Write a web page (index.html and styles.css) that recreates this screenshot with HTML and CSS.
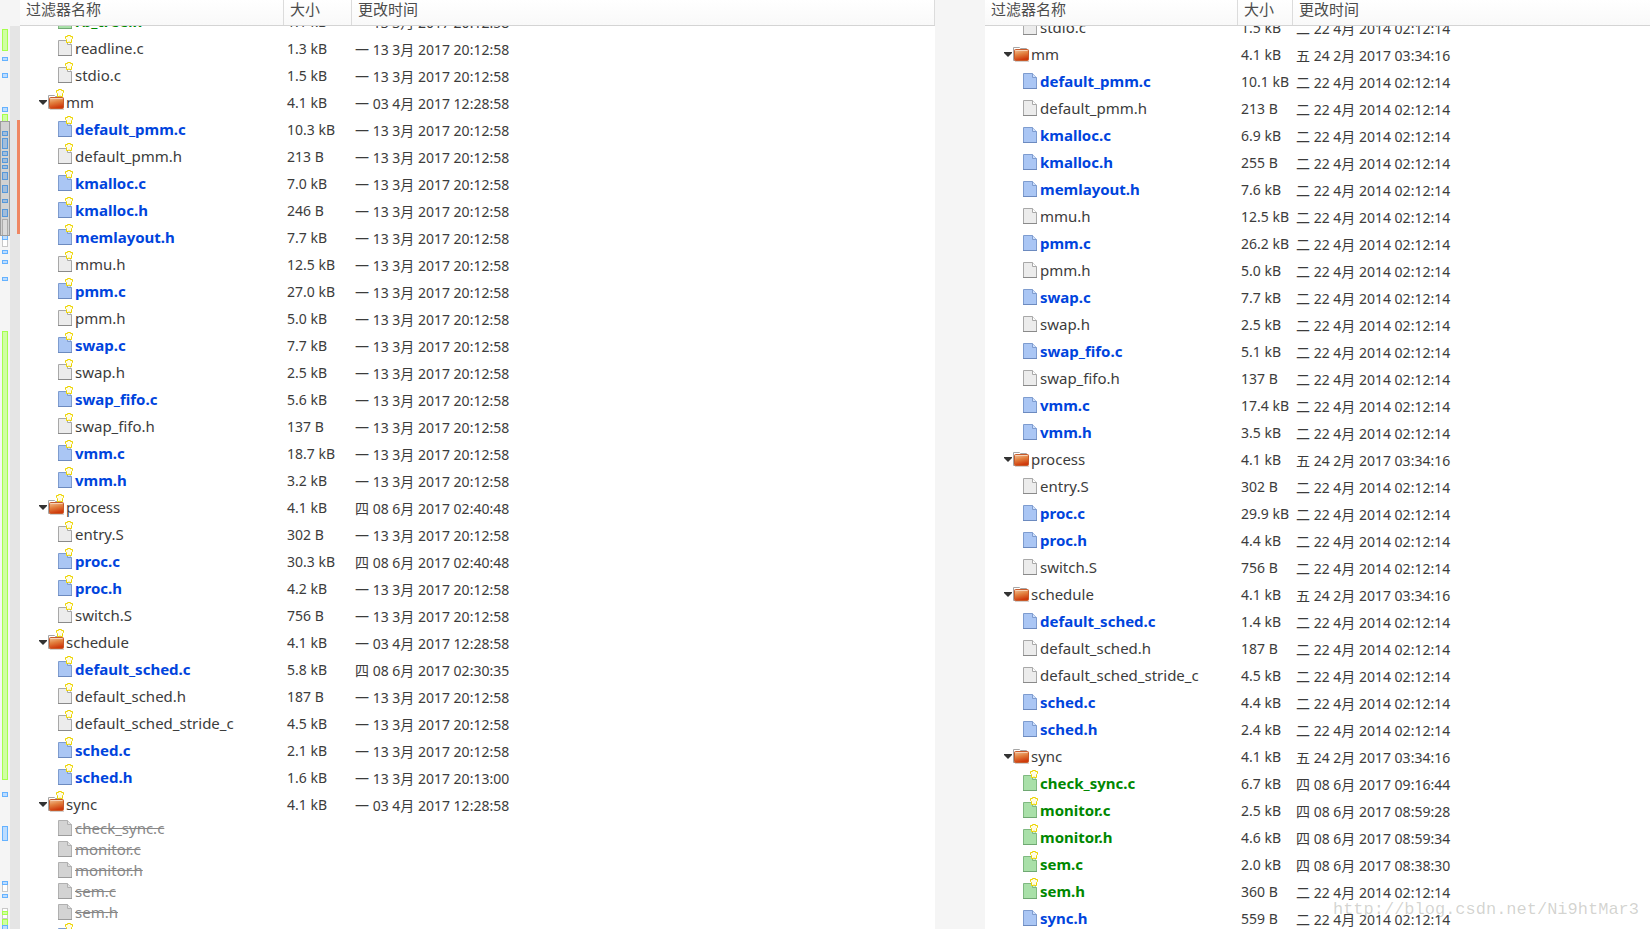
FILE: index.html
```html
<!DOCTYPE html>
<html lang="zh-CN">
<head>
<meta charset="utf-8">
<title>文件夹比较</title>
<link rel="stylesheet" href="styles.css">
</head>
<body>
<svg class="defs" aria-hidden="true">
  <defs>
    <linearGradient id="folder-fill" x1="0" y1="0" x2="0.3" y2="1">
      <stop offset="0" stop-color="#f3c59c"/><stop offset="0.5" stop-color="#e2803f"/><stop offset="1" stop-color="#cf3a0c"/>
    </linearGradient>
    <symbol id="doc" viewBox="0 0 17 27">
      <path d="M0.5 4.5H9.5L13.5 8.5V19.5H0.5Z" fill="var(--fill)" stroke="var(--edge)"/>
      <path d="M9.5 4.5V8.5H13.5" fill="var(--fold)" stroke="var(--edge)"/>
      <path d="M0 19.5H14" stroke="var(--base)"/>
    </symbol>
    <symbol id="star" viewBox="0 0 8 8">
      <path d="M2.5 0.5H5.5V1.5H7.5V3.5L6.5 4.5V7.5H5L4 7L3 7.5H1.5V4.5L0.5 3.5V1.5H2.5Z" fill="#fffce6" stroke="#ecd400"/>
    </symbol>
    <symbol id="doc-new" viewBox="0 0 17 27">
      <use href="#doc" width="17" height="27"/>
      <use href="#star" x="7" y="-1" width="8" height="8"/>
    </symbol>
    <symbol id="dir" viewBox="0 0 18 27">
      <path d="M2 18.5H0.5V5.5H6.5L7.5 6.5H13.5V9" fill="#fff" stroke="#a6a6a6"/>
      <path d="M2 19.5H16" stroke="#d4d0ce"/>
      <rect x="1.5" y="7.5" width="14" height="11" rx="1" fill="url(#folder-fill)" stroke="#c85a2a"/>
      <path d="M2.5 8.5H14.5" stroke="#f6d2b5"/>
    </symbol>
    <symbol id="dir-new" viewBox="0 0 18 27">
      <use href="#dir" width="18" height="27"/>
      <use href="#star" x="8" y="-1" width="8" height="8"/>
    </symbol>
  </defs>
</svg>
<main class="compare">
  <div class="overview">
    <svg class="map" width="10" height="929" aria-label="差异概览">
      <g class="m-same"><rect x="2.5" y="219.5" width="5" height="27"/><rect x="2.5" y="884.5" width="5" height="7"/><rect x="2.5" y="908.5" width="5" height="3"/><rect x="2.5" y="914.5" width="5" height="4"/></g>
      <g class="m-new"><rect x="2.5" y="29.5" width="5" height="21"/><rect x="2.5" y="114.5" width="5" height="7"/><rect x="2.5" y="331.5" width="5" height="448"/><rect x="2.5" y="911.5" width="5" height="3"/><rect x="2.5" y="919.5" width="5" height="6"/></g>
      <g class="m-mod"><rect x="2.5" y="57.5" width="5" height="3"/><rect x="2.5" y="73.5" width="5" height="4"/><rect x="2.5" y="107.5" width="5" height="4"/><rect x="2.5" y="131.5" width="5" height="4"/><rect x="2.5" y="138.5" width="5" height="10"/><rect x="2.5" y="151.5" width="5" height="4"/><rect x="2.5" y="158.5" width="5" height="4"/><rect x="2.5" y="165.5" width="5" height="3"/><rect x="2.5" y="172.5" width="5" height="7"/><rect x="2.5" y="185.5" width="5" height="7"/><rect x="2.5" y="199.5" width="5" height="3"/><rect x="2.5" y="209.5" width="5" height="7"/><rect x="2.5" y="235.5" width="5" height="4"/><rect x="2.5" y="250.5" width="5" height="3"/><rect x="2.5" y="260.5" width="5" height="3"/><rect x="2.5" y="277.5" width="5" height="3"/><rect x="2.5" y="792.5" width="5" height="4"/><rect x="2.5" y="826.5" width="5" height="14"/><rect x="2.5" y="881.5" width="5" height="3"/><rect x="2.5" y="894.5" width="5" height="3"/><rect x="2.5" y="925.5" width="5" height="4"/></g>
      <rect class="m-view" x="0.5" y="121.5" width="9" height="114"/>
    </svg>
    <svg class="track" width="10" height="929" aria-hidden="true"><rect x="7" y="94" width="3" height="114"/></svg>
  </div>
  <section class="pane left">
    <header class="cols"><button>过滤器名称</button><button>大小</button><button>更改时间</button></header>
    <div class="body">
      <table>
        <colgroup><col class="c-name"><col class="c-size"><col></colgroup>
        <tbody>
        <tr class="new"><td><svg><use href="#doc-new"/></svg>rb_tree.h</td><td>1.1 kB</td><td>一 13 3月 2017 20:12:58</td></tr>
        <tr><td><svg><use href="#doc-new"/></svg>readline.c</td><td>1.3 kB</td><td>一 13 3月 2017 20:12:58</td></tr>
        <tr><td><svg><use href="#doc-new"/></svg>stdio.c</td><td>1.5 kB</td><td>一 13 3月 2017 20:12:58</td></tr>
        <tr class="dir"><td><button aria-label="折叠"></button><svg><use href="#dir-new"/></svg>mm</td><td>4.1 kB</td><td>一 03 4月 2017 12:28:58</td></tr>
        <tr class="mod"><td><svg><use href="#doc-new"/></svg>default_pmm.c</td><td>10.3 kB</td><td>一 13 3月 2017 20:12:58</td></tr>
        <tr><td><svg><use href="#doc-new"/></svg>default_pmm.h</td><td>213 B</td><td>一 13 3月 2017 20:12:58</td></tr>
        <tr class="mod"><td><svg><use href="#doc-new"/></svg>kmalloc.c</td><td>7.0 kB</td><td>一 13 3月 2017 20:12:58</td></tr>
        <tr class="mod"><td><svg><use href="#doc-new"/></svg>kmalloc.h</td><td>246 B</td><td>一 13 3月 2017 20:12:58</td></tr>
        <tr class="mod"><td><svg><use href="#doc-new"/></svg>memlayout.h</td><td>7.7 kB</td><td>一 13 3月 2017 20:12:58</td></tr>
        <tr><td><svg><use href="#doc-new"/></svg>mmu.h</td><td>12.5 kB</td><td>一 13 3月 2017 20:12:58</td></tr>
        <tr class="mod"><td><svg><use href="#doc-new"/></svg>pmm.c</td><td>27.0 kB</td><td>一 13 3月 2017 20:12:58</td></tr>
        <tr><td><svg><use href="#doc-new"/></svg>pmm.h</td><td>5.0 kB</td><td>一 13 3月 2017 20:12:58</td></tr>
        <tr class="mod"><td><svg><use href="#doc-new"/></svg>swap.c</td><td>7.7 kB</td><td>一 13 3月 2017 20:12:58</td></tr>
        <tr><td><svg><use href="#doc-new"/></svg>swap.h</td><td>2.5 kB</td><td>一 13 3月 2017 20:12:58</td></tr>
        <tr class="mod"><td><svg><use href="#doc-new"/></svg>swap_fifo.c</td><td>5.6 kB</td><td>一 13 3月 2017 20:12:58</td></tr>
        <tr><td><svg><use href="#doc-new"/></svg>swap_fifo.h</td><td>137 B</td><td>一 13 3月 2017 20:12:58</td></tr>
        <tr class="mod"><td><svg><use href="#doc-new"/></svg>vmm.c</td><td>18.7 kB</td><td>一 13 3月 2017 20:12:58</td></tr>
        <tr class="mod"><td><svg><use href="#doc-new"/></svg>vmm.h</td><td>3.2 kB</td><td>一 13 3月 2017 20:12:58</td></tr>
        <tr class="dir"><td><button aria-label="折叠"></button><svg><use href="#dir-new"/></svg>process</td><td>4.1 kB</td><td>四 08 6月 2017 02:40:48</td></tr>
        <tr><td><svg><use href="#doc-new"/></svg>entry.S</td><td>302 B</td><td>一 13 3月 2017 20:12:58</td></tr>
        <tr class="mod"><td><svg><use href="#doc-new"/></svg>proc.c</td><td>30.3 kB</td><td>四 08 6月 2017 02:40:48</td></tr>
        <tr class="mod"><td><svg><use href="#doc-new"/></svg>proc.h</td><td>4.2 kB</td><td>一 13 3月 2017 20:12:58</td></tr>
        <tr><td><svg><use href="#doc-new"/></svg>switch.S</td><td>756 B</td><td>一 13 3月 2017 20:12:58</td></tr>
        <tr class="dir"><td><button aria-label="折叠"></button><svg><use href="#dir-new"/></svg>schedule</td><td>4.1 kB</td><td>一 03 4月 2017 12:28:58</td></tr>
        <tr class="mod"><td><svg><use href="#doc-new"/></svg>default_sched.c</td><td>5.8 kB</td><td>四 08 6月 2017 02:30:35</td></tr>
        <tr><td><svg><use href="#doc-new"/></svg>default_sched.h</td><td>187 B</td><td>一 13 3月 2017 20:12:58</td></tr>
        <tr><td><svg><use href="#doc-new"/></svg>default_sched_stride_c</td><td>4.5 kB</td><td>一 13 3月 2017 20:12:58</td></tr>
        <tr class="mod"><td><svg><use href="#doc-new"/></svg>sched.c</td><td>2.1 kB</td><td>一 13 3月 2017 20:12:58</td></tr>
        <tr class="mod"><td><svg><use href="#doc-new"/></svg>sched.h</td><td>1.6 kB</td><td>一 13 3月 2017 20:13:00</td></tr>
        <tr class="dir"><td><button aria-label="折叠"></button><svg><use href="#dir-new"/></svg>sync</td><td>4.1 kB</td><td>一 03 4月 2017 12:28:58</td></tr>
        <tr class="gone"><td><svg viewBox="0 3 17 21"><use href="#doc" width="17" height="27"/></svg><s>check_sync.c</s></td><td></td><td></td></tr>
        <tr class="gone"><td><svg viewBox="0 3 17 21"><use href="#doc" width="17" height="27"/></svg><s>monitor.c</s></td><td></td><td></td></tr>
        <tr class="gone"><td><svg viewBox="0 3 17 21"><use href="#doc" width="17" height="27"/></svg><s>monitor.h</s></td><td></td><td></td></tr>
        <tr class="gone"><td><svg viewBox="0 3 17 21"><use href="#doc" width="17" height="27"/></svg><s>sem.c</s></td><td></td><td></td></tr>
        <tr class="gone"><td><svg viewBox="0 3 17 21"><use href="#doc" width="17" height="27"/></svg><s>sem.h</s></td><td></td><td></td></tr>
        <tr class="mod"><td><svg><use href="#doc-new"/></svg></td><td></td><td></td></tr>
        </tbody>
      </table>
    </div>
  </section>
  <section class="pane right">
    <header class="cols"><button>过滤器名称</button><button>大小</button><button>更改时间</button></header>
    <div class="body">
      <table>
        <colgroup><col class="c-name"><col class="c-size"><col></colgroup>
        <tbody>
        <tr><td><svg><use href="#doc"/></svg>stdio.c</td><td>1.5 kB</td><td>二 22 4月 2014 02:12:14</td></tr>
        <tr class="dir"><td><button aria-label="折叠"></button><svg><use href="#dir"/></svg>mm</td><td>4.1 kB</td><td>五 24 2月 2017 03:34:16</td></tr>
        <tr class="mod"><td><svg><use href="#doc"/></svg>default_pmm.c</td><td>10.1 kB</td><td>二 22 4月 2014 02:12:14</td></tr>
        <tr><td><svg><use href="#doc"/></svg>default_pmm.h</td><td>213 B</td><td>二 22 4月 2014 02:12:14</td></tr>
        <tr class="mod"><td><svg><use href="#doc"/></svg>kmalloc.c</td><td>6.9 kB</td><td>二 22 4月 2014 02:12:14</td></tr>
        <tr class="mod"><td><svg><use href="#doc"/></svg>kmalloc.h</td><td>255 B</td><td>二 22 4月 2014 02:12:14</td></tr>
        <tr class="mod"><td><svg><use href="#doc"/></svg>memlayout.h</td><td>7.6 kB</td><td>二 22 4月 2014 02:12:14</td></tr>
        <tr><td><svg><use href="#doc"/></svg>mmu.h</td><td>12.5 kB</td><td>二 22 4月 2014 02:12:14</td></tr>
        <tr class="mod"><td><svg><use href="#doc"/></svg>pmm.c</td><td>26.2 kB</td><td>二 22 4月 2014 02:12:14</td></tr>
        <tr><td><svg><use href="#doc"/></svg>pmm.h</td><td>5.0 kB</td><td>二 22 4月 2014 02:12:14</td></tr>
        <tr class="mod"><td><svg><use href="#doc"/></svg>swap.c</td><td>7.7 kB</td><td>二 22 4月 2014 02:12:14</td></tr>
        <tr><td><svg><use href="#doc"/></svg>swap.h</td><td>2.5 kB</td><td>二 22 4月 2014 02:12:14</td></tr>
        <tr class="mod"><td><svg><use href="#doc"/></svg>swap_fifo.c</td><td>5.1 kB</td><td>二 22 4月 2014 02:12:14</td></tr>
        <tr><td><svg><use href="#doc"/></svg>swap_fifo.h</td><td>137 B</td><td>二 22 4月 2014 02:12:14</td></tr>
        <tr class="mod"><td><svg><use href="#doc"/></svg>vmm.c</td><td>17.4 kB</td><td>二 22 4月 2014 02:12:14</td></tr>
        <tr class="mod"><td><svg><use href="#doc"/></svg>vmm.h</td><td>3.5 kB</td><td>二 22 4月 2014 02:12:14</td></tr>
        <tr class="dir"><td><button aria-label="折叠"></button><svg><use href="#dir"/></svg>process</td><td>4.1 kB</td><td>五 24 2月 2017 03:34:16</td></tr>
        <tr><td><svg><use href="#doc"/></svg>entry.S</td><td>302 B</td><td>二 22 4月 2014 02:12:14</td></tr>
        <tr class="mod"><td><svg><use href="#doc"/></svg>proc.c</td><td>29.9 kB</td><td>二 22 4月 2014 02:12:14</td></tr>
        <tr class="mod"><td><svg><use href="#doc"/></svg>proc.h</td><td>4.4 kB</td><td>二 22 4月 2014 02:12:14</td></tr>
        <tr><td><svg><use href="#doc"/></svg>switch.S</td><td>756 B</td><td>二 22 4月 2014 02:12:14</td></tr>
        <tr class="dir"><td><button aria-label="折叠"></button><svg><use href="#dir"/></svg>schedule</td><td>4.1 kB</td><td>五 24 2月 2017 03:34:16</td></tr>
        <tr class="mod"><td><svg><use href="#doc"/></svg>default_sched.c</td><td>1.4 kB</td><td>二 22 4月 2014 02:12:14</td></tr>
        <tr><td><svg><use href="#doc"/></svg>default_sched.h</td><td>187 B</td><td>二 22 4月 2014 02:12:14</td></tr>
        <tr><td><svg><use href="#doc"/></svg>default_sched_stride_c</td><td>4.5 kB</td><td>二 22 4月 2014 02:12:14</td></tr>
        <tr class="mod"><td><svg><use href="#doc"/></svg>sched.c</td><td>4.4 kB</td><td>二 22 4月 2014 02:12:14</td></tr>
        <tr class="mod"><td><svg><use href="#doc"/></svg>sched.h</td><td>2.4 kB</td><td>二 22 4月 2014 02:12:14</td></tr>
        <tr class="dir"><td><button aria-label="折叠"></button><svg><use href="#dir"/></svg>sync</td><td>4.1 kB</td><td>五 24 2月 2017 03:34:16</td></tr>
        <tr class="new"><td><svg><use href="#doc-new"/></svg>check_sync.c</td><td>6.7 kB</td><td>四 08 6月 2017 09:16:44</td></tr>
        <tr class="new"><td><svg><use href="#doc-new"/></svg>monitor.c</td><td>2.5 kB</td><td>四 08 6月 2017 08:59:28</td></tr>
        <tr class="new"><td><svg><use href="#doc-new"/></svg>monitor.h</td><td>4.6 kB</td><td>四 08 6月 2017 08:59:34</td></tr>
        <tr class="new"><td><svg><use href="#doc-new"/></svg>sem.c</td><td>2.0 kB</td><td>四 08 6月 2017 08:38:30</td></tr>
        <tr class="new"><td><svg><use href="#doc-new"/></svg>sem.h</td><td>360 B</td><td>二 22 4月 2014 02:12:14</td></tr>
        <tr class="mod"><td><svg><use href="#doc"/></svg>sync.h</td><td>559 B</td><td>二 22 4月 2014 02:12:14</td></tr>
        </tbody>
      </table>
    </div>
  </section>
  <div class="watermark">http://blog.csdn.net/Ni9htMar3</div>
</main>
</body>
</html>
```
FILE: styles.css
```css
* { box-sizing: border-box; }

body {
  margin: 0;
  background: #f5f5f5;
  color: #3c3c3c;
  font-family: "Noto Sans", "Noto Sans CJK SC", sans-serif;
  font-size: 14px;
}

button {
  margin: 0;
  padding: 0;
  border: 0;
  background: none;
  color: inherit;
  font: inherit;
}

.defs { position: absolute; width: 0; height: 0; }
symbol { overflow: visible; }

.compare {
  position: relative;
  display: grid;
  grid-template-columns: 20px minmax(0, 915fr) 50px minmax(0, 665fr);
  height: 100vh;
  overflow: hidden;
}

.overview { display: flex; overflow: hidden; }
.map, .track { display: block; flex: none; }
.track { margin-top: 26px; background: #e5e5e5; }
.track rect { fill: #ef8763; }
.m-same rect { fill: #fff; stroke: #c8c8c8; }
.m-new rect { fill: #d0ffa3; stroke: #a5ff4c; }
.m-mod rect { fill: #bdddff; stroke: #65b2ff; }
.m-view { fill: rgb(0 0 0 / 14%); stroke: #9c9c9c; }

.pane {
  display: flex;
  flex-direction: column;
  min-height: 0;
  background: #fff;
}
.left { --name: 264px; --size: 68px; }
.right { --name: 253px; --size: 55px; grid-column: 4; }

.cols {
  display: grid;
  grid-template-columns: var(--name) var(--size) 1fr;
  height: 26px;
  flex: none;
  border-bottom: 1px solid #d4d4d4;
  background: linear-gradient(#fff, #f9f9f9);
}
.cols button {
  padding: 0 0 6px 6px;
  border-right: 1px solid #dcdcdc;
  color: #4c4c4c;
  font-size: 15px;
  line-height: 19px;
  text-align: left;
}
.right .cols button:last-child { border-right: 0; }

.body { flex: 1; min-height: 0; overflow: hidden; }
.left table { margin-top: -17px; }
.right table { margin-top: -11px; }

table {
  width: 100%;
  border-collapse: collapse;
  table-layout: fixed;
}
.c-name { width: var(--name); }
.c-size { width: var(--size); }

tr {
  --fill: #ececec;
  --fold: #fff;
  --edge: #a8a8a8;
  --base: #8a8a8a;
  height: 27px;
}
td {
  height: 27px;
  padding: 0 0 0 3px;
  line-height: 25px;
  white-space: nowrap;
  vertical-align: top;
}
td:first-child { padding-left: 38px; font-size: 15px; }
td:last-child { line-height: 27px; }
td svg {
  width: 17px;
  height: 27px;
  vertical-align: top;
  overflow: visible;
}

.dir td:first-child { padding-left: 19px; }
.dir svg { width: 18px; }
.dir button {
  width: 9px;
  height: 27px;
  vertical-align: top;
}
.dir button::before {
  content: "";
  display: block;
  width: 8px;
  height: 5px;
  margin-bottom: 2px;
  background: #333;
  clip-path: polygon(0 0, 100% 0, 100% 20%, 50% 100%, 0 20%);
}

.mod { --fill: #aac6f4; --fold: #cfe0fb; --edge: #7e9ccf; --base: #6c8abf; }
.new { --fill: #a9e0a9; --fold: #cdf0cd; --edge: #7fb981; --base: #6fa872; }
.mod td:first-child, .new td:first-child { font-weight: 700; }
.mod td:first-child { color: #0044dd; }
.new td:first-child { color: #008800; }

.gone { --fill: #d3d3d3; --fold: #e2e2e2; --edge: #b0b0b0; --base: #9c9c9c; height: 21px; }
.gone td { height: 21px; line-height: 19px; color: #888; }
.gone svg { height: 21px; }

.watermark {
  position: absolute;
  right: 11px;
  bottom: 9px;
  color: rgb(120 120 110 / 32%);
  font-family: "Liberation Mono", monospace;
  font-size: 17px;
  line-height: 20px;
}
```
